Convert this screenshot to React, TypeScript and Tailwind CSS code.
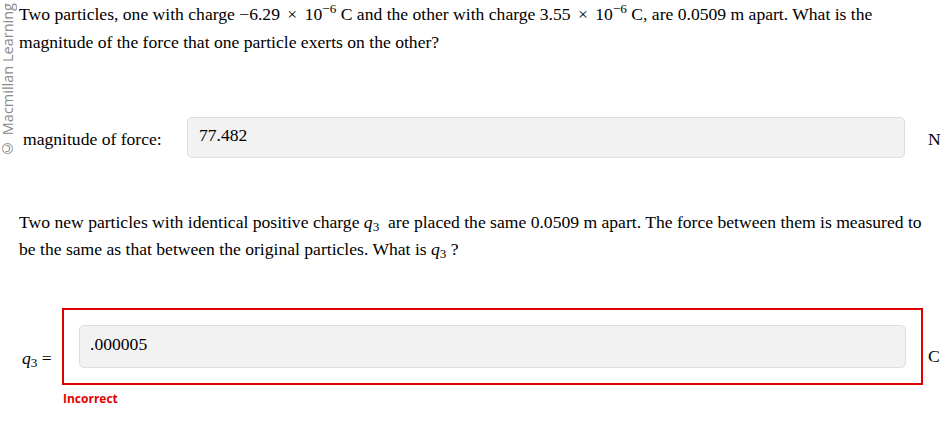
import React from 'react';

const serif = { fontFamily: '"Liberation Serif", "Times New Roman", serif' };

const Q3 = () => (
  <span className="whitespace-nowrap">
    <i>q</i>
    <sub>3</sub>
  </span>
);

const Times = () => <span className="mx-[3px]">×</span>;

const App: React.FC = () => {
  return (
    <div className="relative w-[951px] h-[427px] bg-white text-black overflow-hidden text-[17.6px]" style={serif}>
      {/* watermark */}
      <div
        className="absolute left-0 top-[3px] [writing-mode:vertical-rl] rotate-180 text-[14.5px] leading-[15px] text-[#8a8a8a] whitespace-nowrap"
        style={{ fontFamily: '"Open Sans", "Noto Sans", sans-serif' }}
      >
        © Macmillan Learning
      </div>

      <p className="pl-[19px] pr-[14px] leading-[28px]">
        Two particles, one with charge −6.29 <Times /> 10<sup>−6</sup> C and the other with charge 3.55 <Times />{' '}
        10<sup>−6</sup> C, are 0.0509 m apart. What is the magnitude of the force that one particle exerts on the other?
      </p>

      <div className="flex items-center mt-[61px] h-[41px]">
        <span className="pl-[23px] w-[187px] pt-[4px] whitespace-nowrap">magnitude of force:</span>
        <div className="w-[718px] h-[41px] rounded-[5px] border border-[#dedede] bg-[#f2f2f2] flex items-center px-[11px] pb-[4px]">
          77.482
        </div>
        <span className="ml-[23px] pt-[4px]">N</span>
      </div>

      <p className="pl-[19px] pr-[14px] leading-[27px] mt-[51px]">
        Two new particles with identical positive charge <Q3 />&nbsp; are placed the same 0.0509 m apart. The force
        between them is measured to be the same as that between the original particles. What is <Q3 />&nbsp;?
      </p>

      <div className="flex items-end mt-[45px]">
        <span className="pl-[22px] w-[62px] pb-[14px] whitespace-nowrap">
          <Q3 /> =
        </span>
        <div className="w-[861px] h-[77px] border-2 border-[#e00000] p-[15px]">
          <div className="w-[827px] h-[43px] rounded-[5px] border border-[#dedede] bg-[#f2f2f2] flex items-center px-[10px] pb-[4px]">
            .000005
          </div>
        </div>
        <span className="ml-[5px] pb-[16px]">C</span>
      </div>
      <div
        className="pl-[63px] mt-[6px] text-[12px] font-bold text-[#e00000] leading-[16px]"
        style={{ fontFamily: '"Open Sans", "Noto Sans", sans-serif' }}
      >
        Incorrect
      </div>
    </div>
  );
};

export default App;
